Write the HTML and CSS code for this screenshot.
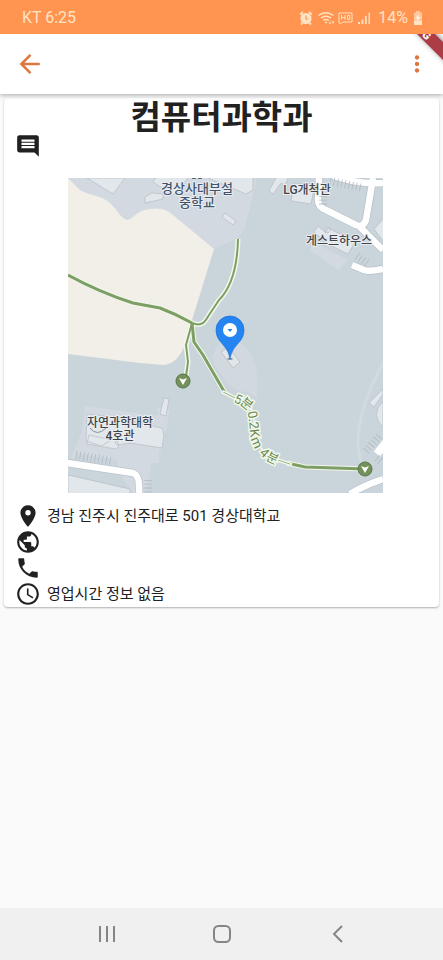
FILE: index.html
```
<!DOCTYPE html>
<html lang="ko">
<head>
<meta charset="utf-8">
<meta name="viewport" content="width=device-width, initial-scale=1">
<title>컴퓨터과학과</title>
<link rel="stylesheet" href="styles.css">
</head>
<body>
<header class="status">
  <span>KT 6:25</span>
  <div class="status-right">
    <svg width="72" height="16" viewBox="0 0 72 16" fill="none" stroke="currentColor" stroke-width="1.2" aria-hidden="true">
      <circle cx="7" cy="8.5" r="5" fill="currentColor"/><path d="M1.2 4.5 4 2M12.8 4.5 10 2M3.5 13 2 14.5M10.500 13l1.500 1.500" stroke-width="1.800"/><path d="M7 5.500V9h2.500" stroke="#ff9550"/>
      <path d="M19.500 5.500Q27 0 34.500 5.500M22 8Q27 4.500 32 8M24.300 10.300Q27 8.500 29.700 10.300M26 12.500h2" stroke-width="1.500"/><path d="M31 11v3M29.800 12.500 31 14l1.200-1.500M34 14v-3M32.900 12.500 34 11l1.200 1.500" stroke-width=".7"/>
      <path d="M40 3h13v9h-9l-3 2-1-2z" stroke-width="1"/><path d="M42.500 5v5M46 5v5M42.500 7.500H46M48.500 5.500h2.200v4h-2.200z" stroke-width="1"/>
      <path d="M60 14v-2M63.400 14V9.500M66.800 14V6" stroke-width="1.800"/><path d="M70.200 14V2.500" stroke-width="1.600" opacity=".8"/>
    </svg>
    <span>14%</span>
    <svg width="10" height="14" viewBox="0 0 10 14" aria-hidden="true"><path d="M3 0h4v1.500h2V14H1V1.500h2z" fill="currentColor" opacity=".65"/><path d="M1 10h8v4H1z" fill="currentColor"/><path d="M5.500 3 2.500 7.500h2L4 11l3.500-5h-2.200z" fill="#fff5e6"/></svg>
  </div>
</header>
<nav class="appbar">
  <button class="icon-button" aria-label="뒤로"><svg width="26" height="26" viewBox="0 0 24 24" fill="none" stroke="currentColor" stroke-width="2.300"><path d="M21 12H4M12.500 3.500 4 12l8.500 8.500"/></svg></button>
  <button class="icon-button" aria-label="메뉴"><svg width="26" height="26" viewBox="0 0 24 24" fill="currentColor"><circle cx="12" cy="6" r="2"/><circle cx="12" cy="12" r="2"/><circle cx="12" cy="18" r="2"/></svg></button>
  <svg class="ribbon" width="40" height="40" viewBox="0 0 40 40" aria-hidden="true">
    <defs><filter id="soft" x="-50%" y="-50%" width="200%" height="200%"><feGaussianBlur stdDeviation="2.500"/></filter></defs>
    <path d="M9-5 45 31V10L30-5z" fill="#777" opacity=".6" filter="url(#soft)"/>
    <path d="M9-5 45 31V13L27-5z" fill="#ab3d47"/>
    <text class="ribbon-text" transform="translate(21 4) rotate(45)">G</text>
  </svg>
</nav>
<main class="content">
  <article class="card">
    <h1 class="title">컴퓨터과학과</h1>
    <button class="comment" aria-label="댓글"><svg class="icon" viewBox="0 0 24 24"><path d="M21.990 4c0-1.100-.890-2-1.990-2H4c-1.100 0-2 .900-2 2v12c0 1.100.900 2 2 2h14l4 4-.010-18zM18 14H6v-2h12v2zm0-3H6V9h12v2zm0-3H6V6h12v2z"/></svg></button>
    <div class="map-frame">
    <svg class="map" viewBox="0 0 315 315" role="img" aria-label="지도">
      <path fill="#cad4db" d="M0 0h315v315H0z"/>
      <path fill="#d2d9e0" d="M0 0h189L177 50l-7 10-18 8-6 3L0 80z"/>
      <path fill="#f2efe9" d="M0 0 12 12C22 18 34 17 42 25 49 31 53 41 59 42 66 41 68 32 83 31Q96 29 105 37L146 71 124 142 120 159Q111 187 95 187L72 185 0 176z"/>
      <path fill="#d2d9e0" d="M245 64l-3 8 28 20 10-10zM17 228l73 10v-9l12 3-9 42h-2v11h-8l-5 30H65L49 293V282L10 276 6 281 3 280 14 253z"/>
      <g fill="#e1e7eb" stroke="#b6bdc3" stroke-width=".7">
        <path d="M19 0 45 16 57 0zM88 0l-3 4 20 13 15-17M140 0l38 16 7-4V0M77 19l7-4 11 1v5l-18 4zM157 35l11 8-3 4-11-8zM208 0l-7 13 4 3 8-11 4 2 3-7M226 5l-3 18 20 3 4-19z"/>
        <path d="M250 48l-4 6 14 12 20 10 9-15-19-6-10-5-2 5zM259 49l-2 4 3 2 3-4z"/>
        <path d="M19 236l24 3 51 11 2 7-2 13-32-5-13 2-2-3 2-5-16 9-15-5zM21 257l28 6 2 5-3 3-29-5zM96 220l5 1-3 17-6-2z"/>
        <path d="M0 297l62 14v10H0zM315 41l-9 10 9 12M301 225l14-14v5l-9 13zM315 223q-13 14 0 26z"/>
      </g>
      <path fill="none" stroke="#d2dae0" stroke-width="3" d="M315 185Q280 250 294 286"/>
      <path fill="#d2d9e0" opacity=".8" d="M153 163q-16 18 0 33 8 17 26 18l10 6V196q-3-24-21-34z"/>
      <path fill="#e3e6e8" stroke="#aab0b4" stroke-width=".6" d="m153 174 7-5 12 15-7 6z"/>
      <g fill="none" stroke="#fff" stroke-linejoin="round">
        <path stroke="#b9c2ca" stroke-width="8" d="M251 0l-1 22q0 7 8 10l30 15q7 3 10-5l7-42M265-2q28 9 50 7M292 49l23 23M284 87l12 5q6 2 19-1M-1 285l66 10q7 2 6 20M282 316q14-9 33-15"/>
        <path stroke-width="6.500" d="M251 0l-1 22q0 7 8 10l30 15q7 3 10-5l7-42M265-2q28 9 50 7M292 49l23 23M284 87l12 5q6 2 19-1M-1 285l66 10q7 2 6 20M282 316q14-9 33-15"/>
        <path stroke-width="8" d="M309 276l10-13"/>
      </g>
      <path fill="none" stroke="#b1bac1" stroke-width="8" stroke-dasharray=".8 3" d="M262 3l33 7M8 277l36 6M289 78l11 8M80 302v13M298 273l15-17M309 280l6 5M255 18v11"/>
      <g fill="none" stroke-linejoin="round">
        <path stroke="#f2f8eb" stroke-width="5" d="M0 97Q31 114 65 125L92 130Q108 136 124 145M124 145c10 4 13-1 17-8l10-15q18-18 19-61M124 145l-6 22 2 17-2 14M124 145l2 19 9 13 22 38M219 285l18 4 60 2"/>
        <path stroke="#7d9f65" stroke-width="3" d="M0 97Q31 114 65 125L92 130Q108 136 124 145M124 145l2 19 9 13 22 38M219 285l18 4 60 2"/>
        <path stroke="#7d9f65" stroke-width="2" d="M124 145c10 4 13-1 17-8l10-15q18-18 19-61M124 145l-6 22 2 17-2 14"/>
        <path id="walk" stroke="#f2f8eb" stroke-width="1.500" d="M156 214C168 222 182 221 185 236C188 250 185 262 193 270C200 280 208 281 222 286"/>
      </g>
      <text class="walk-text"><textPath href="#walk" startOffset="50%" text-anchor="middle">─5분 0.2Km 4분─</textPath></text>
      <g stroke="#587648" fill="#73915b"><circle cx="115" cy="203" r="7"/><circle cx="297" cy="291" r="7"/></g>
      <path d="M111 200l4 1.500 4-1.500-4 7zM293 288l4 1.500 4-1.500-4 7z" fill="#fff"/>
      <path d="M162 181C160 166 148 165 148 152a14 14 0 0 1 28 0C176 165 164 166 162 181z" fill="#2485f2" stroke="#196fd3" stroke-width=".7"/>
      <circle cx="162" cy="152" r="7" fill="#fff"/><path d="M159.500 151h5l-2.500 3z" fill="#2485f2"/><path d="M159.500 181h5" stroke="#315b87"/>
      <path d="M124 0h4M130 0h4" stroke="#59677a" stroke-width="2"/>
      <g class="map-label map-label-school"><text x="129" y="15">경상사대부설</text><text x="129" y="29">중학교</text></g>
      <g class="map-label"><text x="239" y="16">LG개척관</text><text x="271" y="67">게스트하우스</text><text x="52" y="249">자연과학대학</text><text x="52" y="262">4호관</text><path d="M22 250q7 9 16 0" fill="none" stroke="#8b9298" stroke-width="1"/></g>
    </svg>
    </div>
    <ul class="details">
      <li><svg class="icon" viewBox="0 0 24 24" role="img" aria-label="주소"><path d="M12 2C8.130 2 5 5.130 5 9c0 5.250 7 13 7 13s7-7.750 7-13c0-3.870-3.130-7-7-7zm0 9.500a2.500 2.500 0 0 1 0-5 2.500 2.500 0 0 1 0 5z"/></svg><span>경남 진주시 진주대로 501 경상대학교</span></li>
      <li><svg class="icon" viewBox="0 0 24 24" role="img" aria-label="웹사이트"><path d="M12 2C6.480 2 2 6.480 2 12s4.480 10 10 10 10-4.480 10-10S17.520 2 12 2zm-1 17.930c-3.950-.490-7-3.850-7-7.930 0-.620.080-1.210.210-1.790L9 15v1c0 1.100.900 2 2 2v1.930zm6.900-2.540c-.260-.810-1-1.390-1.900-1.390h-1v-3c0-.550-.450-1-1-1H8v-2h2c.550 0 1-.450 1-1V7h2c1.100 0 2-.900 2-2v-.410c2.930 1.190 5 4.060 5 7.410 0 2.080-.800 3.970-2.100 5.390z"/></svg></li>
      <li><svg class="icon" viewBox="0 0 24 24" role="img" aria-label="전화"><path d="M6.620 10.790c1.440 2.830 3.760 5.140 6.590 6.590l2.200-2.200c.270-.270.670-.360 1.020-.240 1.120.370 2.330.570 3.570.570.550 0 1 .450 1 1V20c0 .550-.450 1-1 1-9.390 0-17-7.610-17-17 0-.550.450-1 1-1h3.500c.550 0 1 .450 1 1 0 1.250.200 2.450.570 3.570.110.350.030.740-.250 1.020l-2.200 2.200z"/></svg></li>
      <li><svg class="icon" viewBox="0 0 24 24" role="img" aria-label="영업시간"><path d="M11.990 2C6.470 2 2 6.480 2 12s4.470 10 9.990 10C17.520 22 22 17.520 22 12S17.520 2 11.990 2zM12 20c-4.420 0-8-3.580-8-8s3.580-8 8-8 8 3.580 8 8-3.580 8-8 8zm.500-13H11v6l5.250 3.150.750-1.230-4.500-2.670z"/></svg><span>영업시간 정보 없음</span></li>
    </ul>
  </article>
</main>
<footer class="navbar">
  <button aria-label="최근 앱"><svg width="20" height="20" viewBox="0 0 20 20"><path d="M4 2v16M11 2v16M18 2v16"/></svg></button>
  <button aria-label="홈"><svg width="20" height="20" viewBox="0 0 20 20"><rect x="2" y="2" width="16" height="16" rx="4.500"/></svg></button>
  <button aria-label="이전"><svg width="20" height="20" viewBox="0 0 20 20"><path d="M14 2 6 10l8 8"/></svg></button>
</footer>
</body>
</html>
```
FILE: styles.css
```
* { box-sizing: border-box; }
body {
  margin: 0;
  min-height: 100vh;
  display: flex;
  flex-direction: column;
  background: #fafafa;
  color: #212121;
  font-family: Roboto, "Noto Sans CJK KR", sans-serif;
  font-size: 15px;
}
button {
  display: flex;
  padding: 0;
  border: 0;
  background: none;
  color: inherit;
}
.status {
  display: flex;
  justify-content: space-between;
  align-items: center;
  height: 34px;
  padding: 1px 20px 0 22px;
  background: #ff9550;
  color: #ffe3c5;
  font-size: 16px;
}
.status-right { display: flex; align-items: center; gap: 7px; }
.status-right svg:last-child { margin-left: -2px; }
.appbar {
  position: relative;
  z-index: 1;
  display: flex;
  align-items: center;
  justify-content: space-between;
  height: 60px;
  padding: 0 13px 0 17px;
  background: #fff;
  color: #df763f;
  box-shadow: 0 1px 5px rgba(0, 0, 0, .35);
  clip-path: inset(0 0 -10px 0);
}
.ribbon { position: absolute; top: 0; right: 0; }
.ribbon-text {
  fill: #fff;
  font: 900 11px Roboto, sans-serif;
  text-anchor: middle;
}
.content { flex: 1; padding: 4px; }
.card {
  border-radius: 4px;
  background: #fff;
  box-shadow: 0 1px 2px rgba(0, 0, 0, .3);
}
.title {
  margin: 0;
  padding-top: 4px;
  font-size: 33px;
  font-weight: 700;
  line-height: 31px;
  text-align: center;
}
.comment { margin-left: 11px; }
.icon { display: block; width: 26px; height: 26px; fill: #212121; flex: none; }
.map-frame { padding: 19px 56px 10px 64px; }
.map { display: block; width: 100%; overflow: hidden; }
.map-label {
  fill: #3f444a;
  stroke: #e9edf0;
  stroke-width: 2px;
  paint-order: stroke;
  font: 500 12px Roboto, "Noto Sans CJK KR", sans-serif;
  text-anchor: middle;
}
.map-label-school { fill: #43546b; font-size: 13px; }
.walk-text {
  fill: #68884f;
  stroke: #f2f8eb;
  stroke-width: 3px;
  paint-order: stroke;
  font: 13px Roboto, "Noto Sans CJK KR", sans-serif;
  dominant-baseline: central;
}
.details { margin: 0; padding: 0 11px; list-style: none; }
.details li {
  display: flex;
  align-items: center;
  gap: 6px;
  height: 26px;
  line-height: 26px;
}
.navbar {
  display: flex;
  justify-content: center;
  gap: 96px;
  height: 52px;
  align-items: center;
  background: #f0f0f0;
}
.navbar svg { fill: none; stroke: #858585; stroke-width: 2; }
```
